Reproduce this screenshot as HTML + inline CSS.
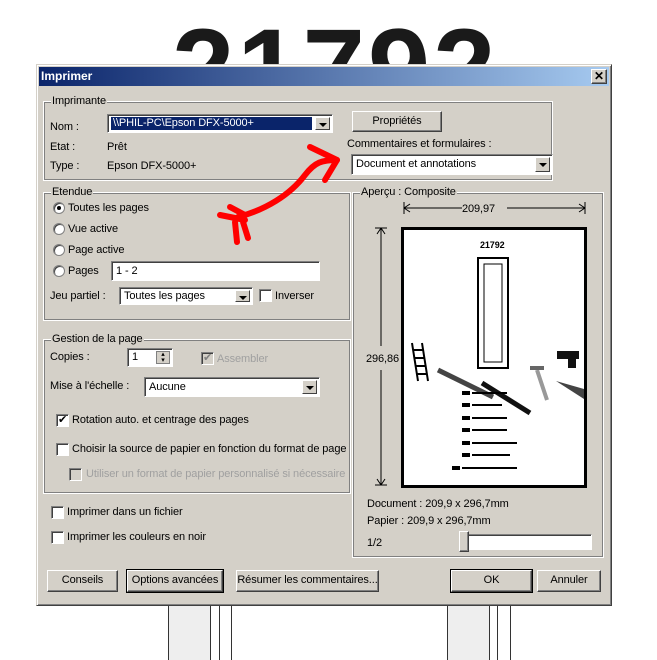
<!DOCTYPE html>
<html><head><meta charset="utf-8"><style>
*{margin:0;padding:0;box-sizing:border-box}
body{width:657px;height:654px;background:#fff;position:relative;overflow:hidden;font-family:"Liberation Sans",sans-serif;font-size:11px;letter-spacing:-0.1px;color:#000}
.a{position:absolute}
.t{position:absolute;white-space:nowrap;line-height:13px}
.grp{position:absolute;border:1px solid #808080;outline:1px solid #fff;outline-offset:0}
.lbl{position:absolute;top:-8px;left:6px;background:#d4d0c8;padding:0 1px;line-height:13px;white-space:nowrap}
.btn{position:absolute;background:#d4d0c8;border:1px solid;border-color:#fff #404040 #404040 #fff;box-shadow:inset -1px -1px 0 #808080;text-align:center;line-height:19px;white-space:nowrap}
.btn.def{outline:1px solid #000}
.inp{position:absolute;background:#fff;border:1px solid;border-color:#808080 #fff #fff #808080;box-shadow:inset 1px 1px 0 #404040;line-height:15px;padding-left:4px;white-space:nowrap}
.dd{position:absolute;right:2px;top:2px;bottom:2px;width:15px;background:#d4d0c8;border:1px solid;border-color:#fff #404040 #404040 #fff}
.dd:after{content:"";position:absolute;left:3px;top:5px;border-left:4px solid transparent;border-right:4px solid transparent;border-top:4px solid #000}
.cb{position:absolute;width:13px;height:13px;background:#fff;border:1px solid;border-color:#808080 #fff #fff #808080;box-shadow:inset 1px 1px 0 #404040}
.rb{position:absolute;width:12px;height:12px;border-radius:50%;background:#fff;border:1px solid #808080;box-shadow:inset 1px 1px 0 #404040}
.dis{color:#a0a0a0}
</style></head><body>
<div class="t" style="left:172px;top:14px;font-size:112px;line-height:110px;font-weight:bold;letter-spacing:3px;color:#1a1a1a">21792</div>
<!-- posts -->
<div class="a" style="left:168px;top:600px;width:43px;height:60px;background:#eee;border-left:1px solid #333;border-right:1px solid #333"></div>
<div class="a" style="left:219px;top:600px;width:1px;height:60px;background:#333"></div>
<div class="a" style="left:231px;top:600px;width:1px;height:60px;background:#333"></div>
<div class="a" style="left:447px;top:600px;width:43px;height:60px;background:#eee;border-left:1px solid #333;border-right:1px solid #333"></div>
<div class="a" style="left:497px;top:600px;width:1px;height:60px;background:#333"></div>
<div class="a" style="left:510px;top:600px;width:1px;height:60px;background:#333"></div>

<div class="a" style="left:36px;top:64px;width:576px;height:542px;background:#d4d0c8;border:1px solid;border-color:#d4d0c8 #404040 #404040 #d4d0c8;box-shadow:inset 1px 1px 0 #fff,inset -1px -1px 0 #808080"></div>
<div class="a" style="left:39px;top:67px;width:570px;height:19px;background:linear-gradient(90deg,#0a246a,#a6caf0)"></div>
<div class="t" style="left:41px;top:70px;color:#fff;font-weight:bold;font-size:12px;letter-spacing:0">Imprimer</div>
<div class="btn" style="left:591px;top:69px;width:16px;height:15px;line-height:12px;font-weight:bold;font-size:12px">✕</div>

<div class="grp" style="left:44px;top:102px;width:508px;height:78px"><span class="lbl">Imprimante</span></div>
<div class="t" style="left:50px;top:121px">Nom :</div>
<div class="inp" style="left:107px;top:114px;width:226px;height:19px"><div class="a" style="left:3px;top:2px;right:20px;height:13px;background:#0a246a;color:#fff;line-height:13px;padding-left:2px">\\PHIL-PC\Epson DFX-5000+</div><div class="dd"></div></div>
<div class="t" style="left:50px;top:141px">Etat :</div><div class="t" style="left:107px;top:141px">Prêt</div>
<div class="t" style="left:50px;top:160px">Type :</div><div class="t" style="left:107px;top:160px">Epson DFX-5000+</div>
<div class="btn" style="left:352px;top:111px;width:90px;height:21px">Propriétés</div>
<div class="t" style="left:347px;top:138px">Commentaires et formulaires :</div>
<div class="inp" style="left:351px;top:154px;width:202px;height:21px;line-height:19px">Document et annotations<div class="dd"></div></div>

<div class="grp" style="left:44px;top:193px;width:306px;height:127px"><span class="lbl">Etendue</span></div>
<div class="rb" style="left:53px;top:202px"><div class="a" style="left:3px;top:3px;width:4px;height:4px;border-radius:50%;background:#000"></div></div><div class="t" style="left:68px;top:202px">Toutes les pages</div>
<div class="rb" style="left:53px;top:223px"></div><div class="t" style="left:68px;top:223px">Vue active</div>
<div class="rb" style="left:53px;top:244px"></div><div class="t" style="left:68px;top:244px">Page active</div>
<div class="rb" style="left:53px;top:265px"></div><div class="t" style="left:68px;top:265px">Pages</div>
<div class="inp" style="left:111px;top:261px;width:209px;height:20px;line-height:18px">1 - 2</div>
<div class="t" style="left:50px;top:290px">Jeu partiel :</div>
<div class="inp" style="left:119px;top:287px;width:134px;height:18px;line-height:16px">Toutes les pages<div class="dd"></div></div>
<div class="cb" style="left:259px;top:289px"></div><div class="t" style="left:275px;top:290px">Inverser</div>

<div class="grp" style="left:44px;top:340px;width:306px;height:153px"><span class="lbl">Gestion de la page</span></div>
<div class="t" style="left:50px;top:351px">Copies :</div>
<div class="inp" style="left:127px;top:348px;width:46px;height:19px;line-height:17px">1<div class="a" style="right:2px;top:2px;width:14px;height:13px;background:#d4d0c8;border:1px solid #808080;font-size:7px;line-height:6px;text-align:center">▴<br>▾</div></div>
<div class="cb" style="left:201px;top:352px;background:#d4d0c8;color:#808080;font-size:11px;line-height:11px;text-align:center">✔</div><div class="t dis" style="left:217px;top:353px">Assembler</div>
<div class="t" style="left:50px;top:380px">Mise à l'échelle :</div>
<div class="inp" style="left:144px;top:377px;width:176px;height:20px;line-height:18px">Aucune<div class="dd"></div></div>
<div class="cb" style="left:56px;top:414px;font-size:11px;line-height:11px;text-align:center">✔</div><div class="t" style="left:72px;top:414px">Rotation auto. et centrage des pages</div>
<div class="cb" style="left:56px;top:443px"></div><div class="t" style="left:72px;top:443px">Choisir la source de papier en fonction du format de page</div>
<div class="cb" style="left:69px;top:468px;background:#d4d0c8"></div><div class="t dis" style="left:86px;top:468px">Utiliser un format de papier personnalisé si nécessaire</div>
<div class="cb" style="left:51px;top:506px"></div><div class="t" style="left:67px;top:506px">Imprimer dans un fichier</div>
<div class="cb" style="left:51px;top:531px"></div><div class="t" style="left:67px;top:531px">Imprimer les couleurs en noir</div>

<div class="grp" style="left:353px;top:193px;width:250px;height:364px"><span class="lbl">Aperçu : Composite</span></div>
<svg class="a" style="left:360px;top:198px" width="240" height="300">
<g stroke="#000" stroke-width="1" fill="none">
<path d="M44 4v12M225 4v12M44 10h58M147 10h78M44 10l6 -4M44 10l6 4M225 10l-6-4M225 10l-6 4"/>
<path d="M15 30h12M15 287h12M21 30v118M21 172v115M21 30l-4 6M21 30l4 6M21 287l-4-6M21 287l4-6"/>
</g>
<text x="102" y="14" font-family="Liberation Sans" font-size="11">209,97</text>
<text x="6" y="164" font-family="Liberation Sans" font-size="11">296,86</text>
<rect x="42.5" y="30.5" width="183" height="258" fill="#fff" stroke="#000" stroke-width="3"/>
<text x="120" y="50" font-family="Liberation Sans" font-size="9" font-weight="bold">21792</text>
<rect x="118" y="60" width="30" height="110" fill="none" stroke="#000" stroke-width="2"/>
<rect x="124" y="66" width="18" height="98" fill="none" stroke="#000" stroke-width="1"/>
<path d="M52 145l6 38M62 145l6 38M54 152h9M55 160h9M56 168h9M57 176h9" stroke="#000" stroke-width="2"/>
<path d="M78 172l55 27" stroke="#444" stroke-width="5"/>
<path d="M122 185l48 30" stroke="#111" stroke-width="5"/>
<path d="M177 172l10 30" stroke="#999" stroke-width="4"/>
<path d="M170 170h14" stroke="#666" stroke-width="4"/>
<path d="M196 183l28 8v10z" fill="#444"/>
<path d="M197 153h22v8h-22z M208 160h8v10h-8z" fill="#111"/>
<g fill="#000"><rect x="102" y="193" width="8" height="4"/><rect x="102" y="205" width="8" height="4"/><rect x="102" y="218" width="8" height="4"/><rect x="102" y="230" width="8" height="4"/><rect x="102" y="243" width="8" height="4"/><rect x="102" y="255" width="8" height="4"/><rect x="92" y="268" width="8" height="4"/>
<rect x="112" y="194" width="35" height="2"/><rect x="112" y="206" width="30" height="2"/><rect x="112" y="219" width="35" height="2"/><rect x="112" y="231" width="35" height="2"/><rect x="112" y="244" width="45" height="2"/><rect x="112" y="256" width="38" height="2"/><rect x="102" y="269" width="55" height="2"/></g>
</svg>
<div class="t" style="left:367px;top:498px">Document : 209,9 x 296,7mm</div>
<div class="t" style="left:367px;top:515px">Papier : 209,9 x 296,7mm</div>
<div class="t" style="left:367px;top:537px">1/2</div>
<div class="inp" style="left:459px;top:534px;width:133px;height:16px"></div>
<div class="btn" style="left:459px;top:531px;width:10px;height:21px"></div>

<div class="btn" style="left:47px;top:570px;width:71px;height:22px">Conseils</div>
<div class="btn def" style="left:127px;top:570px;width:96px;height:22px">Options avancées</div>
<div class="btn" style="left:236px;top:570px;width:143px;height:22px">Résumer les commentaires...</div>
<div class="btn def" style="left:451px;top:570px;width:81px;height:22px">OK</div>
<div class="btn" style="left:537px;top:570px;width:64px;height:22px">Annuler</div>

<svg class="a" style="left:0;top:0" width="657" height="654">
<g stroke="#f00" stroke-width="6" fill="none" stroke-linecap="round" stroke-linejoin="round">
<path d="M238 217 C265 210 290 195 305 175 C315 162 322 160 337 160"/>
<path d="M310 147 L337 160 L325 180"/>
<path d="M220 215 L245 220 M230 207 L245 215 M235 222 L237 242 M243 222 L248 238"/>
</g></svg>
</body></html>
